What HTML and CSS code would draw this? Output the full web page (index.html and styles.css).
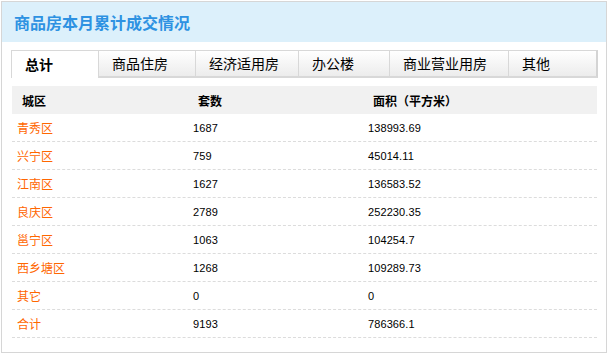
FILE: index.html
```html
<!DOCTYPE html>
<html lang="zh-CN">
<head>
<meta charset="utf-8">
<title>商品房本月累计成交情况</title>
<link rel="stylesheet" href="styles.css">
</head>
<body>
<div class="panel">
  <div class="title-bar"><h2 class="title">商品房本月累计成交情况</h2></div>
  <div class="content">
    <div class="tabs">
      <div class="tab active w1">总计</div>
      <div class="tab w2">商品住房</div>
      <div class="tab w3">经济适用房</div>
      <div class="tab w4">办公楼</div>
      <div class="tab w5">商业营业用房</div>
      <div class="tab last w6">其他</div>
    </div>
    <div class="table">
      <div class="row head">
        <div class="cell">城区</div>
        <div class="cell">套数</div>
        <div class="cell">面积（平方米）</div>
      </div>
      <div class="row"><div class="cell city">青秀区</div><div class="cell num">1687</div><div class="cell num">138993.69</div></div>
      <div class="row"><div class="cell city">兴宁区</div><div class="cell num">759</div><div class="cell num">45014.11</div></div>
      <div class="row"><div class="cell city">江南区</div><div class="cell num">1627</div><div class="cell num">136583.52</div></div>
      <div class="row"><div class="cell city">良庆区</div><div class="cell num">2789</div><div class="cell num">252230.35</div></div>
      <div class="row"><div class="cell city">邕宁区</div><div class="cell num">1063</div><div class="cell num">104254.7</div></div>
      <div class="row"><div class="cell city">西乡塘区</div><div class="cell num">1268</div><div class="cell num">109289.73</div></div>
      <div class="row"><div class="cell city">其它</div><div class="cell num">0</div><div class="cell num">0</div></div>
      <div class="row"><div class="cell city">合计</div><div class="cell num">9193</div><div class="cell num">786366.1</div></div>
    </div>
  </div>
</div>
</body>
</html>
```
FILE: styles.css
```css
* { box-sizing: border-box; }
html, body { margin: 0; padding: 0; background: #fff; }
body {
  font-family: "Noto Sans CJK SC", "Liberation Sans", sans-serif;
  font-size: 12px;
  color: #000;
}
.panel {
  margin: 1px 0 0 1px;
  width: 606px;
  height: 352px;
  border: 1px solid #d6d6d6;
}
.title-bar {
  height: 40px;
  background: #dcf0fb;
  display: flex;
  align-items: center;
  padding-left: 12px;
}
.title {
  margin: 0;
  font-size: 16px;
  font-weight: 700;
  color: #2e92e2;
  line-height: 20px;
}
.content {
  padding: 8px 9px 0 10px;
}
.tabs {
  display: flex;
  margin: 0 -1px 0 -1px;
  height: 28px;
}
.tab {
  height: 28px;
  font-size: 14px;
  line-height: 25px;
  padding-left: 13px;
  border-top: 1px solid #d8d8d8;
  border-left: 1px solid #d8d8d8;
  border-bottom: 2px solid #d8d8d8;
  background: linear-gradient(#ffffff, #ececec);
  white-space: nowrap;
}
.tab.active {
  background: #fff;
  border-bottom: 0;
  font-weight: 700;
  line-height: 27px;
}
.tab.last { border-right: 2px solid #d4d4d4; }
.w1 { width: 87px; }
.w2 { width: 97px; }
.w3 { width: 103px; }
.w4 { width: 91px; }
.w5 { width: 119px; }
.w6 { width: 90px; }
.table { margin-top: 8px; }
.row {
  display: grid;
  grid-template-columns: 176px 175px 1fr;
  height: 28px;
  align-items: center;
  border-bottom: 1px dashed #dcdcdc;
}
.row.head {
  background: #f1f1f1;
  border-bottom: 0;
  font-weight: 700;
}
.cell { padding-left: 5px; white-space: nowrap; }
.head .cell { padding-left: 10px; }
.city { color: #ff6600; }
.num {
  font-family: "Liberation Sans", "DejaVu Sans", sans-serif;
  font-size: 11px;
  letter-spacing: 0.1px;
  padding-top: 1px;
}
```
